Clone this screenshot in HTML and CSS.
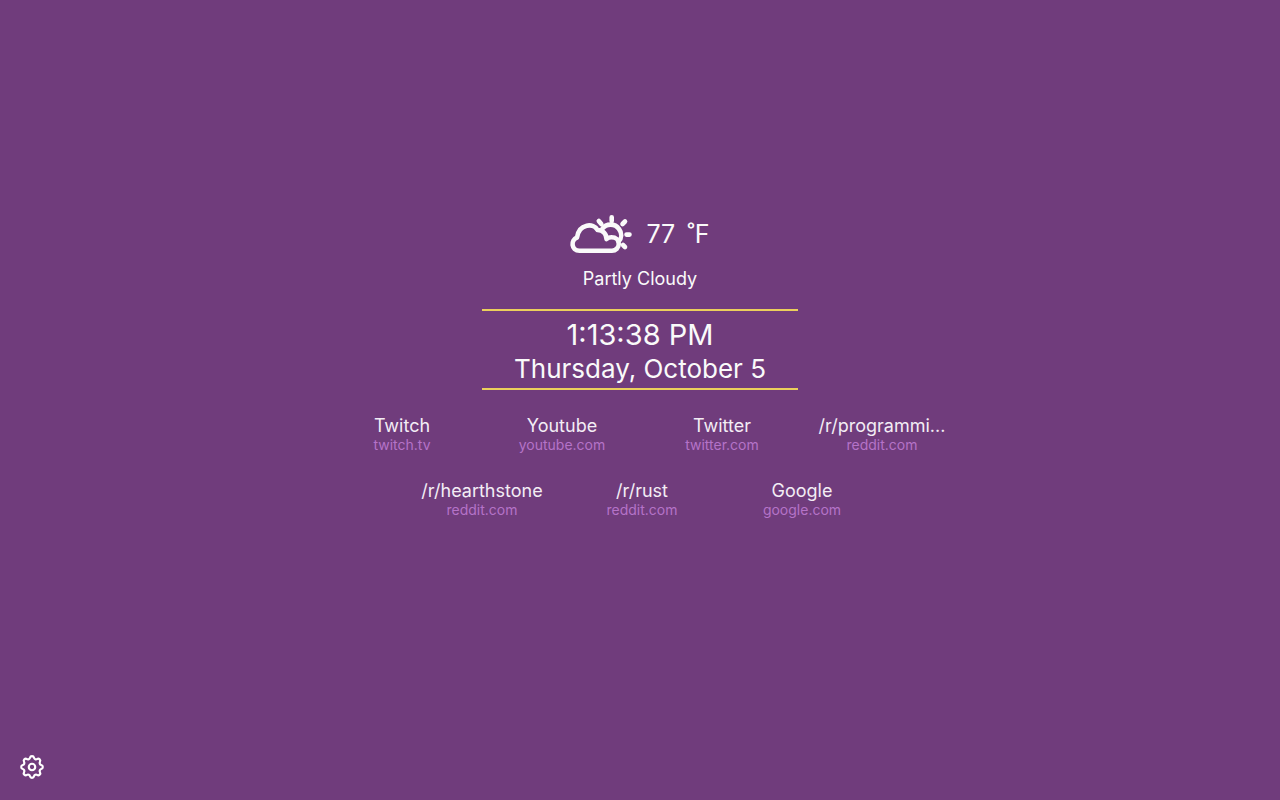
FILE: index.html
```html
<!DOCTYPE html>
<html lang="en">
<head>
<meta charset="utf-8">
<meta name="viewport" content="width=device-width, initial-scale=1">
<title>New Tab</title>
<link rel="stylesheet" href="styles.css">
</head>
<body>
<main class="dashboard">
  <section class="weather" aria-label="Weather">
    <div class="weather-now">
      <svg class="weather-icon" viewBox="0 0 70 48" fill="none" stroke="currentColor" stroke-width="4.600" stroke-linecap="round" stroke-linejoin="round" aria-hidden="true">
        <path d="M13.500 40.700H46A6.800 6.800 0 0 0 52.800 34C52.800 30 50 27.300 45.500 27.300C43.500 27.300 42 27.800 40.500 29C40.500 24 37 20 31.500 20C28 13 13 13 11 27.500C4.500 30 5 40.700 13.500 40.700Z"/>
        <path d="M36.500 18.500C40 13.500 49 13 53 19C56 23 56 28 52.500 31.500"/>
        <path d="M45.700 7.300V11M32.800 11L35.300 14M59 11.500L56.500 14M60.500 24.600H63.500M57 35L59 37"/>
      </svg>
      <span class="temperature"><span>77</span><span>˚F</span></span>
    </div>
    <div class="condition">Partly Cloudy</div>
  </section>
  <section class="clock" aria-label="Clock">
    <time class="time">1:13:38 PM</time>
    <time class="date">Thursday, October 5</time>
  </section>
  <nav class="links" aria-label="Bookmarks">
    <a class="link" href="https://twitch.tv"><span class="name">Twitch</span><span class="host">twitch.tv</span></a>
    <a class="link" href="https://youtube.com"><span class="name">Youtube</span><span class="host">youtube.com</span></a>
    <a class="link" href="https://twitter.com"><span class="name">Twitter</span><span class="host">twitter.com</span></a>
    <a class="link" href="https://reddit.com/r/programming"><span class="name">/r/programmi...</span><span class="host">reddit.com</span></a>
    <a class="link" href="https://reddit.com/r/hearthstone"><span class="name">/r/hearthstone</span><span class="host">reddit.com</span></a>
    <a class="link" href="https://reddit.com/r/rust"><span class="name">/r/rust</span><span class="host">reddit.com</span></a>
    <a class="link" href="https://google.com"><span class="name">Google</span><span class="host">google.com</span></a>
  </nav>
</main>
<button class="settings" type="button" aria-label="Settings">
  <svg class="settings-icon" viewBox="2 2 20 20" fill="none" stroke="currentColor" stroke-width="1.800" aria-hidden="true">
    <path d="M10.325 4.317c.426-1.756 2.924-1.756 3.35 0a1.724 1.724 0 002.573 1.066c1.543-.94 3.31.826 2.37 2.37a1.724 1.724 0 001.065 2.572c1.756.426 1.756 2.924 0 3.35a1.724 1.724 0 00-1.066 2.573c.94 1.543-.826 3.31-2.37 2.37a1.724 1.724 0 00-2.572 1.065c-.426 1.756-2.924 1.756-3.35 0a1.724 1.724 0 00-2.573-1.066c-1.543.94-3.31-.826-2.37-2.37a1.724 1.724 0 00-1.065-2.572c-1.756-.426-1.756-2.924 0-3.35a1.724 1.724 0 001.066-2.573c-.94-1.543.826-3.31 2.37-2.37.996.608 2.296.07 2.572-1.065z"/>
    <circle cx="12" cy="12" r="2.700"/>
  </svg>
</button>
</body>
</html>
```
FILE: styles.css
```css
* {
  box-sizing: border-box;
}

body {
  margin: 0;
  background: #703c7c;
  color: #fafafa;
  font-family: Inter, "Liberation Sans", sans-serif;
}

.dashboard {
  min-height: 100vh;
  padding-bottom: 72px;
  display: flex;
  flex-direction: column;
  align-items: center;
  justify-content: center;
}

.weather {
  text-align: center;
}

.weather-now {
  display: flex;
  align-items: center;
  justify-content: center;
  gap: 10px;
  padding-right: 4px;
}

.weather-icon {
  width: 70px;
  height: 48px;
}

.temperature {
  display: flex;
  gap: 12px;
  font-size: 25px;
  line-height: 48px;
}

.condition {
  margin-top: 9px;
  font-size: 18px;
  line-height: 24px;
}

.clock {
  margin-top: 18px;
  padding: 6px 32px 2px;
  border-top: 2px solid #ebcf5c;
  border-bottom: 2px solid #ebcf5c;
  text-align: center;
}

.time,
.date {
  display: block;
}

.time {
  font-size: 29px;
  line-height: 35px;
}

.date {
  font-size: 26px;
  line-height: 34px;
}

.links {
  max-width: 644px;
  margin-top: 24px;
  padding-left: 4px;
  display: flex;
  flex-wrap: wrap;
  justify-content: center;
  row-gap: 26px;
}

.link {
  width: 160px;
  padding: 0 16px;
  color: inherit;
  text-align: center;
  text-decoration: none;
  white-space: nowrap;
}

.name,
.host {
  display: block;
}

.name {
  color: #f3edf5;
  font-size: 18px;
  line-height: 23px;
}

.host {
  color: #b573c8;
  font-size: 14px;
  line-height: 16px;
}

.settings {
  position: fixed;
  left: 20px;
  bottom: 21px;
  padding: 0;
  border: 0;
  background: none;
  color: #fff;
  cursor: pointer;
}

.settings-icon {
  display: block;
  width: 24px;
  height: 24px;
}
```
